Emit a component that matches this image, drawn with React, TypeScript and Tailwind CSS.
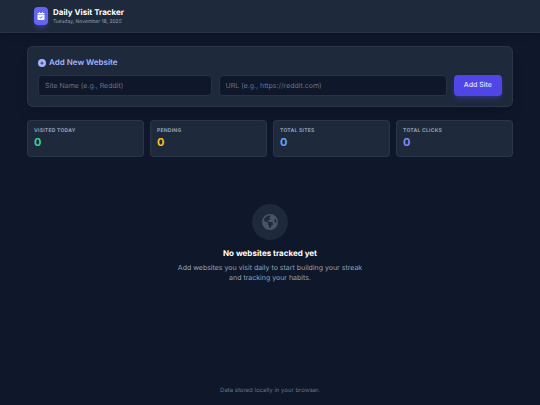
import { FaCalendarCheck, FaCirclePlus, FaEarthAmericas } from "react-icons/fa6";

const stats = [
  { label: "Visited Today", value: 0, color: "text-[#34d399]" },
  { label: "Pending", value: 0, color: "text-[#fbbf24]" },
  { label: "Total Sites", value: 0, color: "text-[#60a5fa]" },
  { label: "Total Clicks", value: 0, color: "text-[#818cf8]" },
];

const inputClass =
  "h-[21px] w-full min-w-0 rounded-sm border border-[#263346] bg-[#0f172a] px-1.5 text-[7px] text-slate-100 [text-rendering:geometricPrecision] placeholder:text-[#64748b] focus:border-indigo-500 focus:outline-none";

export default function App() {
  return (
    <div className="flex min-h-screen flex-col bg-[#0f172a] font-['Inter',sans-serif] text-slate-100 [text-rendering:geometricPrecision]">
      <header className="border-b border-[#263346] bg-[#1e293b] shadow-md">
        <div className="flex h-8 items-center gap-[5px] px-[34px]">
          <div className="flex h-[18px] w-[14px] items-center justify-center rounded-sm bg-[#6366f1] text-white shadow-md shadow-[#6366f1]/30">
            <FaCalendarCheck className="size-2" />
          </div>
          <div>
            <h1 className="text-[8px] leading-[11px] font-bold text-white">Daily Visit Tracker</h1>
            <p className="text-[5px] leading-[8px] text-[#94a3b8]">Tuesday, November 18, 2025</p>
          </div>
        </div>
      </header>

      <main className="flex flex-1 flex-col px-[27px] pt-[13px]">
        <section className="rounded-md border border-[#334155]/50 bg-[#1e293b] p-[10px] shadow-lg">
          <h2 className="flex items-center gap-[3px] text-[8px] leading-[11px] font-semibold text-[#a5b4fc]">
            <FaCirclePlus className="size-2" />
            Add New Website
          </h2>
          <form
            className="mt-[7px] grid grid-cols-[19fr_25fr_auto] items-center gap-[7px]"
            onSubmit={(e) => e.preventDefault()}
          >
            <input type="text" aria-label="Site name" placeholder="Site Name (e.g., Reddit)" className={inputClass} />
            <input type="url" aria-label="Site URL" placeholder="URL (e.g., https://reddit.com)" className={inputClass} />
            <button
              type="submit"
              className="h-[21px] rounded-sm bg-[#4f46e5] px-[10px] text-[7px] font-medium text-[#e0e7ff] shadow-md shadow-[#4f46e5]/30 [text-rendering:geometricPrecision] hover:bg-[#6366f1]"
            >
              Add Site
            </button>
          </form>
        </section>

        <section className="mt-[13px] grid grid-cols-4 gap-[6px]">
          {stats.map((stat) => (
            <div key={stat.label} className="rounded-sm border border-[#334155]/50 bg-[#1e293b] px-1.5 pt-[6px] pb-[7px]">
              <p className="text-[5px] leading-[8px] font-bold tracking-wider text-[#94a3b8] uppercase">
                {stat.label}
              </p>
              <p className={`text-[11px] leading-[14px] font-bold ${stat.color}`}>{stat.value}</p>
            </div>
          ))}
        </section>

        <section className="mt-[47px] flex flex-col items-center text-center">
          <div className="flex size-9 items-center justify-center rounded-full bg-[#1e293b] text-[#475569]">
            <FaEarthAmericas className="size-4" />
          </div>
          <h3 className="mt-[8px] text-[8px] leading-[11px] font-bold text-white">No websites tracked yet</h3>
          <p className="mt-[4px] max-w-[190px] text-[7px] leading-[10px] text-[#94a3b8]">
            Add websites you visit daily to start building your streak and tracking your habits.
          </p>
        </section>
      </main>

      <footer className="pb-[10px] text-center text-[6px] leading-[8px] text-[#64748b]">
        Data stored locally in your browser.
      </footer>
    </div>
  );
}
